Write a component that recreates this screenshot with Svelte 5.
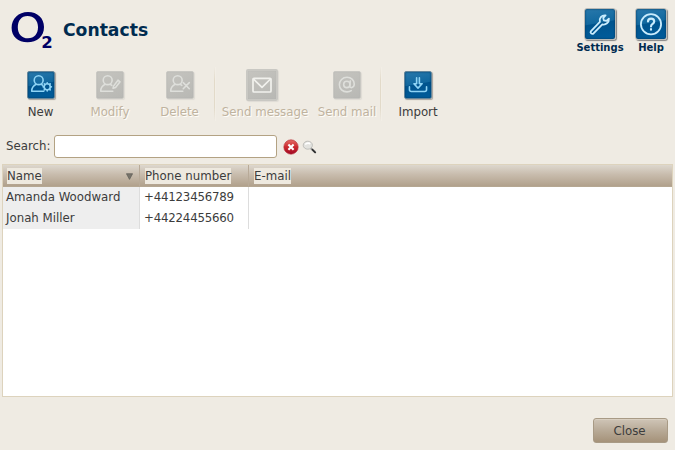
<script>
  const contacts = [
    { name: 'Amanda Woodward', phone: '+44123456789', email: '' },
    { name: 'Jonah Miller', phone: '+44224455660', email: '' }
  ];
  const tools = [
    { label: 'New', icon: 'new', width: 69, active: true },
    { label: 'Modify', icon: 'modify', width: 70 },
    { label: 'Delete', icon: 'delete', width: 69 },
    { divider: true },
    { label: 'Send message', icon: 'message', width: 92, large: true },
    { label: 'Send mail', icon: 'mail', width: 72 },
    { divider: true, last: true },
    { label: 'Import', icon: 'import', width: 66, active: true }
  ];
  let query = $state('');
</script>

{#snippet glyph(kind)}
  <svg viewBox="0 0 28 28" aria-hidden="true">
    {#if kind === 'new' || kind === 'modify' || kind === 'delete'}
      <circle cx="11.5" cy="8.8" r="4.8" />
      <path d="M8.7 13.2C5.5 14.8 4 17.5 4 20.8H17M14.2 13.2L16 14.4" />
    {/if}
    {#if kind === 'new'}
      <circle cx="20.7" cy="16" r="3.3" />
      <path d="M20.7 11.5v1M20.7 19.5v1M16.2 16h1M24.2 16h1M17.5 12.8l.8.8M23.9 12.8l-.8.8M17.5 19.2l.8-.8M23.9 19.2l-.8-.8" />
    {:else if kind === 'modify'}
      <path d="M17.8 15.2L22.6 8.8L24.8 10.5L20 16.6L17.3 17.5Z" />
    {:else if kind === 'delete'}
      <path d="M17.5 11.5L24 18M24 11.5L17.5 18" />
    {:else if kind === 'message'}
      <rect x="5" y="7.3" width="18" height="13.7" rx="1" />
      <path d="M5.5 8L14 16.4L22.5 8" />
    {:else if kind === 'mail'}
      <circle cx="13.8" cy="13.4" r="3.4" />
      <path d="M17.6 9.6L17 15C17 18.1 21.8 17 21.8 13C21.8 8.6 18.2 5.7 14 5.7C9.3 5.7 5.8 9.2 5.8 13.7C5.8 18.2 9.2 21.4 14 21.4C16 21.4 17.5 20.9 18.6 20.1" />
    {:else if kind === 'import'}
      <path d="M12.5 6.3V12.6H9.6L14 17.4L18.4 12.6H15.5V6.3M4.8 16V19.2Q4.8 21 6.8 21H21.2Q23.2 21 23.2 19.2V16" />
    {:else if kind === 'settings'}
      <path d="M5.6 20.6L13.9 12.1C12.9 8.8 15.5 5.5 19.2 6L17 8.3L17.6 10.6L20 11.1L22.3 9C22.7 12.7 19.2 15.2 16.2 14.3L8 22.8C6.4 24 4.3 22.1 5.6 20.6Z" />
    {:else if kind === 'help'}
      <circle cx="14" cy="14.2" r="9.4" />
      <path class="heavy" d="M11.2 11.7C11.2 8 17 8 17 11.7C17 14 14 13.9 14 16.3M14 18.8V19.3" />
    {/if}
  </svg>
{/snippet}

<main>
  <header>
    <svg class="logo" viewBox="0 0 44 42" role="img" aria-label="O2">
      <path fill="#000066" fill-rule="evenodd" d="M17 .9C26.5 .9 33 7 33 16C33 25.5 26 31.3 16.5 31.3C7 31.3 .6 25.5 .6 16.7C.6 7.5 7.5 .9 17 .9ZM16.5 4.9C10.3 4.9 6.8 9.5 6.8 16.2C6.8 22.9 10.7 27.3 17 27.3C23.3 27.3 27 22.9 27 16C27 9.3 22.8 4.9 16.5 4.9Z" />
      <text x="30.3" y="36.8">2</text>
    </svg>
    <h1>Contacts</h1>
    <div class="shortcuts">
      <button class="shortcut"><span class="tile big">{@render glyph('settings')}</span><b>Settings</b></button>
      <button class="shortcut help"><span class="tile big">{@render glyph('help')}</span><b>Help</b></button>
    </div>
  </header>

  <nav>
    {#each tools as tool}
      {#if tool.divider}
        <i class="divider" class:last={tool.last}></i>
      {:else}
        <button class="tool" class:off={!tool.active} style:width="{tool.width}px">
          <span class="slot" class:wide={tool.large}><span class="tile" class:large={tool.large}>{@render glyph(tool.icon)}</span></span>
          <span class="label">{tool.label}</span>
        </button>
      {/if}
    {/each}
  </nav>

  <div class="search">
    <label for="query">Search:</label>
    <input id="query" bind:value={query} />
    <svg class="clear" viewBox="0 0 16 16" aria-label="Clear">
      <defs><linearGradient id="red" x2="0" y2="1"><stop stop-color="#e36c65" /><stop offset=".5" stop-color="#cb292e" /><stop offset="1" stop-color="#9f0825" /></linearGradient></defs>
      <circle cx="8" cy="8" r="7.2" fill="url(#red)" stroke="#b52b35" stroke-width=".6" />
      <path d="M5.4 5.5L10.6 10.7M10.6 5.5L5.4 10.7" stroke="#fff" stroke-width="2.1" />
    </svg>
    <svg class="find" viewBox="0 0 16 16" aria-label="Find">
      <path d="M8.5 9L13.4 13.4" stroke="#999" stroke-width="2.2" />
      <path d="M10 10.3L13.7 14" stroke="#292929" stroke-width="1.6" />
      <ellipse cx="5.8" cy="6.2" rx="4.6" ry="4" fill="#e3e3df" stroke="#b4b4b0" stroke-width=".8" />
      <path d="M3.2 5.6Q5.4 3 8.3 4.8" stroke="#fff" stroke-width="1.6" fill="none" />
    </svg>
  </div>

  <section class="list">
    <div class="row head">
      <div class="name"><span>Name</span><svg viewBox="0 0 7 7"><path d="M.4.7H6.6L3.5 6.4Z" fill="#77736a" stroke="#605f59" stroke-width=".7" /></svg></div>
      <div class="phone"><span>Phone number</span></div>
      <div class="email"><span>E-mail</span></div>
    </div>
    {#each contacts as contact}
      <div class="row">
        <div class="name">{contact.name}</div>
        <div class="phone digits">{contact.phone}</div>
        <div class="email">{contact.email}</div>
      </div>
    {/each}
  </section>

  <footer><button class="close">Close</button></footer>
</main>

<style>
  :global(body) { margin: 0; background: #efebe3; }
  main {
    box-sizing: border-box; width: 675px; height: 450px; overflow: hidden;
    display: flex; flex-direction: column; background: #efebe3; color: #3c3c3c;
    font: 13.1px/16px "DejaVu Sans Condensed", "DejaVu Sans", sans-serif;
    font-stretch: condensed;
  }
  button { border: 0; padding: 0; margin: 0; background: none; font: inherit; color: inherit; }
  header { height: 62px; display: flex; flex: none; padding-left: 11px; }
  .logo { width: 44px; height: 42px; margin-top: 11px; }
  .logo text { font: bold 16.5px "DejaVu Sans", sans-serif; fill: #000066; }
  h1 { margin: 20px 0 0 8px; font: bold 17.2px/20px "DejaVu Sans", sans-serif; color: #002b50; }
  .shortcuts { display: flex; margin-left: auto; padding: 8px 7px 0 0; }
  .shortcut { display: flex; flex-direction: column; align-items: center; width: 50px; height: 48px; }
  .shortcut.help { width: 34px; margin-left: 9px; }
  .shortcut b { font: bold 10px/12px "DejaVu Sans", sans-serif; color: #002b50; margin-top: 2px; }
  .tile {
    box-sizing: border-box; display: block; flex: none; width: 28px; height: 28px;
    border: 1px solid #65879c; border-radius: 2px;
    background: linear-gradient(170deg, #2878ab 0, #11689f 45%, #00548e 48%, #005c9b 100%);
    box-shadow: inset 0 0 2px #003861, 1px 1px 1px #aaa49d;
  }
  .tile :global(svg) { display: block; width: 26px; height: 26px; fill: none; stroke: #8fd4f5; stroke-width: 1.7; stroke-linejoin: round; stroke-linecap: round; }
  .tile.big { width: 32px; height: 32px; border: 1px solid #b9b9b6; border-radius: 3px; box-shadow: inset 0 0 2px #003153, 1px 1px 1px #858584; }
  .tile.big { margin-right: 1px; }
  .tile.big :global(svg) { width: 30px; height: 30px; stroke: #c9ecfd; }
  .heavy { stroke-width: 2; }
  nav { height: 70px; flex: none; display: flex; padding-left: 6px; align-items: flex-start; }
  .tool { display: flex; flex-direction: column; align-items: center; height: 60px; }
  .slot { display: flex; align-items: center; justify-content: center; height: 34px; margin: 6px 0 0; }
  .slot.wide { margin-right: 6px; }
  .label { margin-top: 2px; line-height: 16px; white-space: nowrap; }
  .off .label { color: #bfb39f; text-shadow: 1px 1px #fffdf8; }
  .off .tile { background: linear-gradient(150deg, #c5c4bf, #b8b8b4); border-color: #c9c8c3; box-shadow: inset 0 0 1px #aaa, 1px 1px 1px #dedbd4; }
  .off .tile :global(svg) { stroke: #dedfdb; }
  .off .tile.large { width: 32px; height: 32px; border-width: 2px; }
  .off .tile.large :global(svg) { width: 28px; height: 28px; stroke: #f1f1ed; }
  .divider { width: 1px; height: 54px; margin: 5px 3px 0 0; background: linear-gradient(#efebe3, #e2dac9 25%, #e2dac9 75%, #efebe3); border-right: 1px solid #f2eee6; }
  .divider.last { margin-left: -3px; }
  .search { display: flex; height: 32px; flex: none; align-items: flex-start; padding-left: 6px; }
  label { width: 48px; padding-top: 6px; }
  input { box-sizing: border-box; width: 223px; height: 23px; margin-top: 3px; padding: 0 5px; border: 1px solid #b3a283; border-radius: 3px; background: #fff; font: inherit; outline: none; }
  .clear { width: 16px; height: 16px; margin: 7px 0 0 6px; }
  .find { width: 16px; height: 16px; margin: 7px 0 0 3px; }
  .list { box-sizing: border-box; flex: none; width: 671px; height: 233px; margin-left: 2px; border: 1px solid #ddd3bd; background: #fff; }
  .row { display: flex; height: 21px; }
  .row > div { box-sizing: border-box; padding: 2px 4px 0; white-space: nowrap; }
  .row .name { width: 137px; padding-left: 3px; background: #eee; border-right: 1px solid #ddd; }
  .row .phone { width: 109px; border-right: 1px solid #ddd; }
  .row .digits { letter-spacing: -.2px; }
  .row .email { flex: 1; }
  .head.row { height: 21px; background: linear-gradient(#ddd7ce, #c8bcad 45%, #b1a18c); border-bottom: 1px solid #b5a792; }
  .head.row .name { display: flex; justify-content: space-between; background: none; border-color: #b8aa98; padding-left: 4px; padding-right: 6px; }
  .head.row .phone { border-color: #b8aa98; }
  .head.row > div { padding-top: 3px; padding-left: 5px; }
  .head span { display: inline-block; height: 16px; line-height: 16px; background: #eee9df; }
  .head svg { width: 7px; height: 7px; margin-top: 5px; }
  footer { display: flex; justify-content: flex-end; padding: 21px 7px 0 0; }
  .close { box-sizing: border-box; width: 75px; height: 25px; padding-right: 2px; border: 1px solid #a89a85; border-radius: 3px; background: linear-gradient(#cfc5b7, #b8aa97 50%, #a59279); box-shadow: inset 0 1px #d8cec0; }
</style>
